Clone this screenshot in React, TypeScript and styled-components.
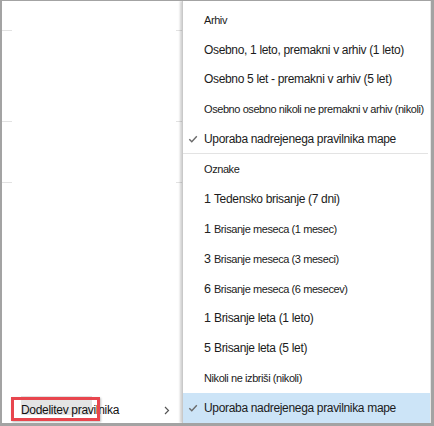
import React from "react";
import styled, { createGlobalStyle } from "styled-components";

const Global = createGlobalStyle`
  html, body { margin: 0; padding: 0; background: #fff; }
  body { font-family: "Liberation Sans", Arial, sans-serif; color: #1b1b1b; }
`;

const Frame = styled.div`
  width: 434px;
  height: 426px;
  box-sizing: border-box;
  border-style: solid;
  border-color: #a3a3a3;
  border-width: 1px 3px 3px 2px;
  display: flex;
  overflow: hidden;
  background: #fff;
`;

const LeftPanel = styled.div`
  width: 180px;
  flex: none;
  display: flex;
  flex-direction: column;
  background: #fff;
`;

const Spacer = styled.div<{ $h: number }>`
  height: ${(p) => p.$h}px;
  flex: none;
`;

const Divider = styled.div`
  height: 1px;
  display: flex;
  justify-content: space-between;
  flex: none;
`;

const Tick = styled.span<{ $w: number }>`
  width: ${(p) => p.$w}px;
  height: 1px;
  background: #e2e2e2;
`;

const LeftItem = styled.div`
  margin-top: auto;
  position: relative;
  height: 26px;
  display: flex;
  align-items: center;
  padding: 0 12px 0 19px;
  font-size: 12px;
  letter-spacing: -0.3px;
  color: #111;
`;

const ItemLabel = styled.span`
  position: relative;
  flex: 1;
`;

const Selection = styled.span`
  position: absolute;
  left: 0;
  top: -7px;
  width: 71px;
  height: 19px;
  background: #e4e4e4;
  z-index: 0;
`;

const LabelText = styled.span`
  position: relative;
  z-index: 1;
`;

const Callout = styled.div`
  position: absolute;
  left: 9px;
  top: 0px;
  width: 89px;
  height: 24px;
  box-sizing: border-box;
  border: 3px solid #e8464e;
  box-shadow: 1px 1px 2px rgba(0, 0, 0, 0.25);
  pointer-events: none;
  z-index: 2;
`;

const Menu = styled.div`
  flex: 1;
  position: relative;
  display: flex;
  flex-direction: column;
  padding-top: 4.5px;
  box-sizing: border-box;
  border-left: 1px solid #c9c9c9;
  border-right: 1px solid #e6e6e6;
  box-shadow: -2px 0 2px rgba(0, 0, 0, 0.18);
  background: #fff;
`;

const Row = styled.div<{ $h: number; $active?: boolean }>`
  position: relative;
  height: ${(p) => p.$h}px;
  flex: none;
  display: flex;
  align-items: center;
  padding-left: 21px;
  white-space: nowrap;
  background: ${(p) => (p.$active ? "#cce4f7" : "transparent")};
`;

const Text = styled.span<{ $small?: boolean }>`
  font-size: ${(p) => (p.$small ? 11 : 12)}px;
  letter-spacing: ${(p) => (p.$small ? -0.42 : -0.33)}px;
  color: #1b1b1b;
`;

const Num = styled.span`
  font-size: 12.5px;
  color: #222;
  margin-right: 3px;
`;

const Check = styled.svg`
  position: absolute;
  left: 5px;
  top: 50%;
  transform: translateY(-50%);
`;

const Separator = styled.div`
  height: 1px;
  flex: none;
  margin-right: 2px;
  background: #e3e3e3;
`;

const Chevron = styled.svg`
  flex: none;
`;

const CheckMark = () => (
  <Check width="10" height="10" viewBox="0 0 10 10">
    <path d="M1.3 5.2 L3.8 7.8 L8.8 2.2" fill="none" stroke="#6a6a6a" strokeWidth="1.4" />
  </Check>
);

const H1 = 29.6;
const H2 = 29.8;

export default function App() {
  return (
    <>
      <Global />
      <Frame>
        <LeftPanel>
          <Spacer $h={29} />
          <Divider>
            <Tick $w={10} />
            <Tick $w={6} />
          </Divider>
          <Spacer $h={90} />
          <Divider>
            <Tick $w={10} />
            <Tick $w={6} />
          </Divider>
          <Spacer $h={60} />
          <Divider>
            <Tick $w={10} />
            <Tick $w={6} />
          </Divider>
          <LeftItem>
            <ItemLabel>
              <Selection />
              <LabelText>Dodelitev pravilnika</LabelText>
            </ItemLabel>
            <Chevron width="6" height="9" viewBox="0 0 6 9">
              <path d="M1 1 L4.5 4.5 L1 8" fill="none" stroke="#555" strokeWidth="1.2" />
            </Chevron>
            <Callout />
          </LeftItem>
        </LeftPanel>
        <Menu>
          <Row $h={H1}>
            <Text $small>Arhiv</Text>
          </Row>
          <Row $h={H1}>
            <Text>Osebno, 1 leto, premakni v arhiv (1 leto)</Text>
          </Row>
          <Row $h={H1}>
            <Text>Osebno 5 let - premakni v arhiv (5 let)</Text>
          </Row>
          <Row $h={H1}>
            <Text $small>Osebno osebno nikoli ne premakni v arhiv (nikoli)</Text>
          </Row>
          <Row $h={H1}>
            <CheckMark />
            <Text>Uporaba nadrejenega pravilnika mape</Text>
          </Row>
          <Separator />
          <Row $h={H2}>
            <Text $small>Oznake</Text>
          </Row>
          <Row $h={H2}>
            <Num>1</Num>
            <Text>Tedensko brisanje (7 dni)</Text>
          </Row>
          <Row $h={H2}>
            <Num>1</Num>
            <Text $small>Brisanje meseca (1 mesec)</Text>
          </Row>
          <Row $h={H2}>
            <Num>3</Num>
            <Text $small>Brisanje meseca (3 meseci)</Text>
          </Row>
          <Row $h={H2}>
            <Num>6</Num>
            <Text $small>Brisanje meseca (6 mesecev)</Text>
          </Row>
          <Row $h={H2}>
            <Num>1</Num>
            <Text>Brisanje leta (1 leto)</Text>
          </Row>
          <Row $h={H2}>
            <Num>5</Num>
            <Text>Brisanje leta (5 let)</Text>
          </Row>
          <Row $h={H2}>
            <Text $small>Nikoli ne izbriši (nikoli)</Text>
          </Row>
          <Row $h={H2} $active>
            <CheckMark />
            <Text>Uporaba nadrejenega pravilnika mape</Text>
          </Row>
        </Menu>
      </Frame>
    </>
  );
}
